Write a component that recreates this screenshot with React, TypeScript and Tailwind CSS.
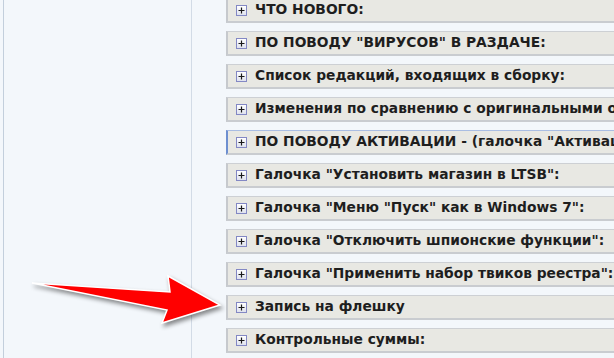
import React from "react";

const rows: string[] = [
  "ЧТО НОВОГО:",
  "ПО ПОВОДУ \"ВИРУСОВ\" В РАЗДАЧЕ:",
  "Список редакций, входящих в сборку:",
  "Изменения по сравнению с оригинальными образами:",
  "ПО ПОВОДУ АКТИВАЦИИ - (галочка \"Активация\"):",
  "Галочка \"Установить магазин в LTSB\":",
  "Галочка \"Меню \"Пуск\" как в Windows 7\":",
  "Галочка \"Отключить шпионские функции\":",
  "Галочка \"Применить набор твиков реестра\":",
  "Запись на флешку",
  "Контрольные суммы:",
];

const PlusIcon = () => (
  <span className="flex h-[11px] w-[11px] shrink-0 items-center justify-center border border-[#8388c4] bg-gradient-to-b from-white to-[#dfe2ee]">
    <svg width="9" height="9" viewBox="0 0 9 9">
      <path d="M1.5 4.5h6M4.5 1.5v6" stroke="#1a1a1a" strokeWidth="1.2" />
    </svg>
  </span>
);

const Spoiler = ({ title, active }: { title: string; active?: boolean }) => (
  <div
    className={
      "flex h-[25px] w-[600px] shrink-0 items-center gap-[8px] border-b-2 border-l-2 border-t bg-[#e8e8e3] pl-[8px] " +
      (active ? "border-l-[#6d8fd0] border-t-[#a9bde3] border-b-[#c9ccd0]" : "border-l-[#c6c9cd] border-t-[#cdd0d4] border-b-[#c9ccd0]")
    }
  >
    <PlusIcon />
    <span className="whitespace-nowrap text-[13.8px] font-bold leading-none text-[#1e1e1e]">{title}</span>
  </div>
);

const Arrow = () => (
  <svg
    className="pointer-events-none absolute left-0 top-0"
    width="614"
    height="358"
    viewBox="0 0 614 358"
    style={{ filter: "drop-shadow(2px 3px 2px rgba(0,0,0,0.45))" }}
  >
    <polygon
      points="32,283 170,292 168,276 220,305 162,323 167,310"
      fill="#ff0000"
      stroke="#ffffff"
      strokeWidth="1.5"
      strokeLinejoin="miter"
    />
  </svg>
);

export default function App() {
  return (
    <div
      className="relative flex h-[358px] w-[614px] overflow-hidden bg-[#f3f7fb]"
      style={{ fontFamily: "'DejaVu Sans', Verdana, sans-serif" }}
    >
      <div className="ml-[3px] w-[189px] shrink-0 border-l border-r border-l-[#c3cfdc] border-r-[#d2dbe6]" />
      <div className="flex flex-col gap-[8px] pl-[34px] pt-0 -mt-[2px]">
        {rows.map((r, i) => (
          <Spoiler key={i} title={r} active={i === 4} />
        ))}
      </div>
      <Arrow />
    </div>
  );
}
